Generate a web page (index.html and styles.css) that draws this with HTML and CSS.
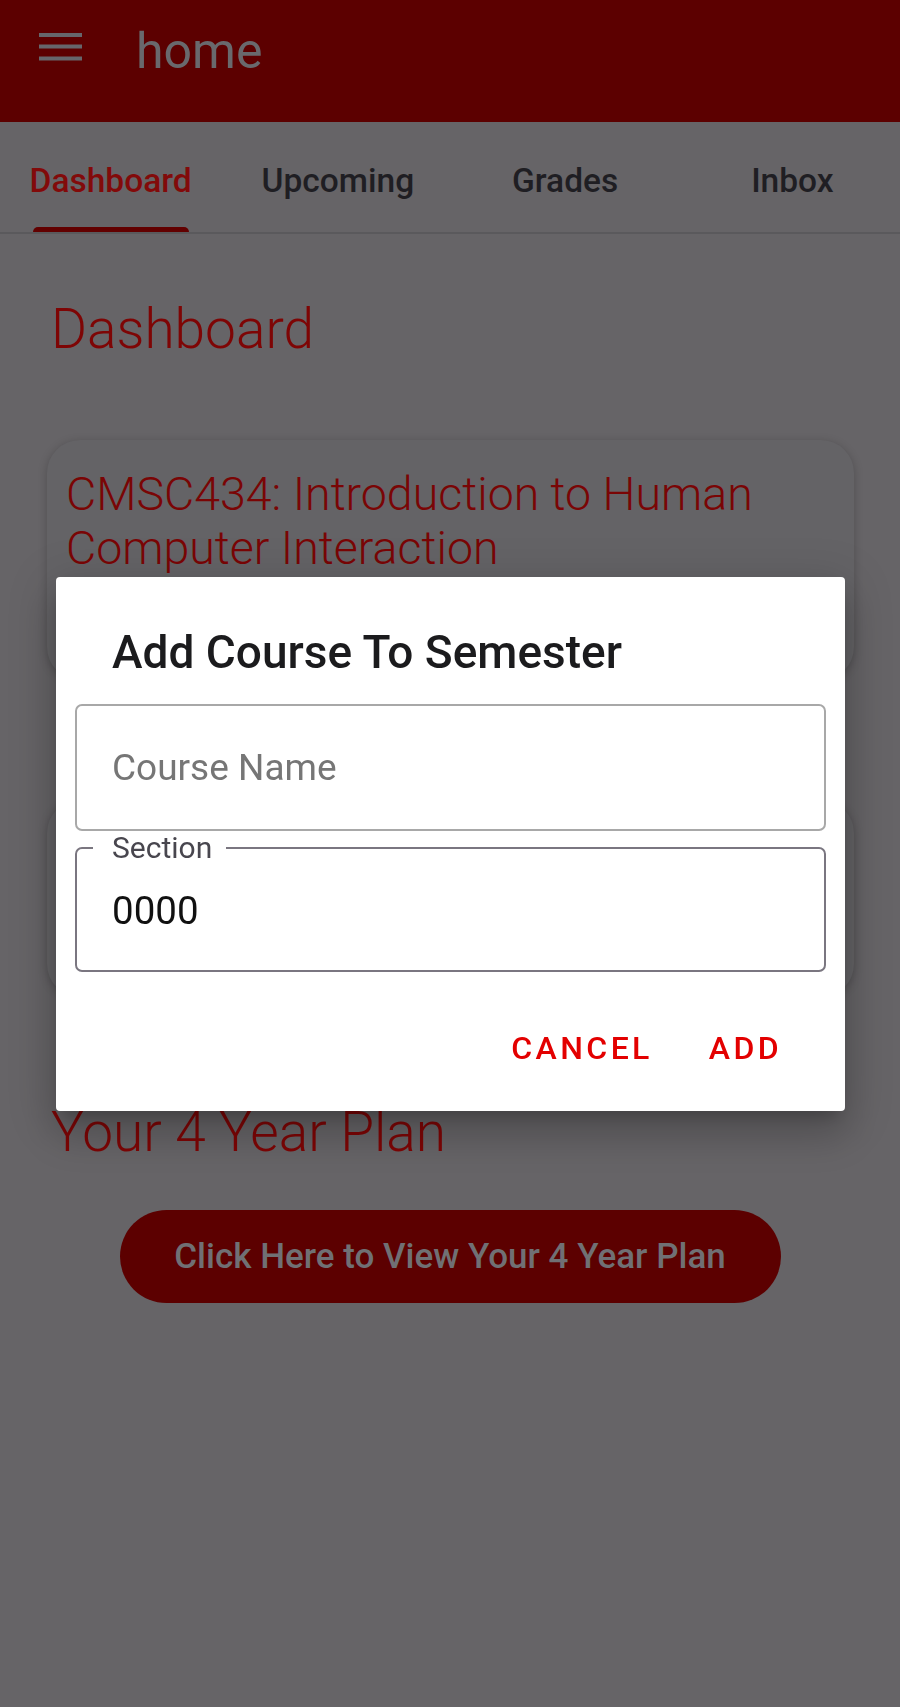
FILE: index.html
```html
<!DOCTYPE html>
<html lang="en">
<head>
<meta charset="utf-8">
<title>home</title>
<link rel="stylesheet" href="styles.css">
</head>
<body>
  <header class="topbar">
    <svg class="menu-icon" width="43" height="28" viewBox="0 0 43 28" aria-hidden="true">
      <rect x="0" y="0" width="43" height="4" fill="currentColor"/>
      <rect x="0" y="11.5" width="43" height="4" fill="currentColor"/>
      <rect x="0" y="23.5" width="43" height="4" fill="currentColor"/>
    </svg>
    <span class="app-title">home</span>
  </header>

  <nav class="tabs">
    <div class="tab active"><span class="tab-inner"><span class="tab-label">Dashboard</span><span class="indicator"></span></span></div>
    <div class="tab"><span class="tab-inner"><span class="tab-label">Upcoming</span></span></div>
    <div class="tab"><span class="tab-inner"><span class="tab-label">Grades</span></span></div>
    <div class="tab"><span class="tab-inner"><span class="tab-label">Inbox</span></span></div>
  </nav>

  <main class="content">
    <h1 class="section-heading first">Dashboard</h1>
    <section class="card card-one">
      <h2 class="card-title">CMSC434: Introduction to Human Computer Interaction</h2>
    </section>
    <section class="card card-two"></section>
    <h1 class="section-heading">Your 4 Year Plan</h1>
    <div class="plan-row">
      <button class="plan-button">Click Here to View Your 4 Year Plan</button>
    </div>
  </main>

  <div class="scrim">
    <div class="dialog" role="dialog">
      <h3 class="dialog-title">Add Course To Semester</h3>
      <div class="field">
        <span class="placeholder">Course Name</span>
      </div>
      <fieldset class="field-outlined">
        <legend class="field-label">Section</legend>
        <div class="field-value">0000</div>
      </fieldset>
      <div class="dialog-actions">
        <button class="text-button">CANCEL</button>
        <button class="text-button">ADD</button>
      </div>
    </div>
  </div>
</body>
</html>
```

FILE: styles.css
```css
* {
  box-sizing: border-box;
}

html, body {
  margin: 0;
  padding: 0;
  background: #666467;
}

body {
  width: 900px;
  min-height: 1707px;
  font-family: Roboto, "Noto Sans", "Liberation Sans", sans-serif;
}

/* ---------- Top bar ---------- */
.topbar {
  height: 122px;
  background: #5c0000;
  display: flex;
  align-items: flex-start;
  padding-left: 39px;
}

.menu-icon {
  color: #66666b;
  margin-top: 33px;
  flex: none;
}

.app-title {
  margin-top: 22px;
  margin-left: 54px;
  font-size: 50px;
  line-height: 58px;
  color: #69696d;
  font-weight: 400;
}

/* ---------- Tabs ---------- */
.tabs {
  display: flex;
  height: 112px;
  border-bottom: 2px solid #5a595c;
  margin-left: -3px;
  margin-right: -6px;
}

.tab {
  flex: 1;
  display: flex;
  justify-content: center;
  padding-top: 39px;
}

.tab-inner {
  display: flex;
  flex-direction: column;
  align-items: stretch;
}

.tab-label {
  font-size: 33.5px;
  line-height: 40px;
  font-weight: 500;
  color: #1f1e23;
  white-space: nowrap;
}

.tab.active .tab-label {
  color: #820a0a;
}

.indicator {
  display: block;
  margin-top: 26px;
  height: 7px;
  margin-left: 3px;
  margin-right: 3px;
  background: #620000;
  border-radius: 5px 5px 0 0;
}

/* ---------- Content ---------- */
.content {
  padding: 0 46px 0 47px;
}

.section-heading {
  margin: 104px 0 0 4px;
  font-size: 55px;
  line-height: 63px;
  font-weight: 300;
  color: #7e0505;
}

.section-heading.first {
  margin-top: 64px;
}

.card {
  background: #646366;
  border-radius: 33px;
  box-shadow: 0 2px 10px rgba(0, 0, 0, 0.22);
  padding: 27px 19px;
}

.card-one {
  margin-top: 79px;
  height: 240px;
}

.card-two {
  margin-top: 120px;
  height: 197px;
}

.card-title {
  margin: 0;
  font-size: 46.5px;
  line-height: 54px;
  font-weight: 300;
  color: #7a0505;
}

.plan-row {
  display: flex;
  justify-content: center;
  margin-top: 46px;
  margin-left: -47px;
  margin-right: -46px;
}

.plan-button {
  width: 661px;
  height: 93px;
  border: none;
  border-radius: 47px;
  background: #5c0000;
  color: #707074;
  font-family: Roboto, "Noto Sans", "Liberation Sans", sans-serif;
  font-size: 35px;
  font-weight: 500;
  padding: 0;
}

/* ---------- Dialog ---------- */
.scrim {
  position: fixed;
  inset: 0;
  display: flex;
  align-items: center;
  justify-content: center;
}

.dialog {
  width: 789px;
  margin-bottom: 19px;
  margin-left: 1px;
  background: #ffffff;
  border-radius: 4px;
  padding: 48px 19px 33px;
  box-shadow: 0 11px 15px -7px rgba(0, 0, 0, 0.2),
              0 24px 38px 3px rgba(0, 0, 0, 0.14),
              0 9px 46px 8px rgba(0, 0, 0, 0.12);
}

.dialog-title {
  margin: 0 0 25px 37px;
  font-size: 46px;
  line-height: 54px;
  font-weight: 500;
  color: #1b1b1d;
}

.field {
  height: 127px;
  border: 2px solid #a8a8a8;
  border-radius: 7px;
  display: flex;
  align-items: center;
  padding-left: 35px;
}

.placeholder {
  font-size: 37px;
  color: #767676;
}

.field-outlined {
  margin: 0;
  padding: 0 0 37px 16px;
  border: 2px solid #7a7680;
  border-radius: 7px;
  min-width: 0;
}

.field-label {
  padding: 0 14px 0 19px;
  font-size: 30px;
  line-height: 34px;
  color: #48464e;
}

.field-value {
  margin-top: 24px;
  padding-left: 19px;
  font-size: 38.5px;
  line-height: 44px;
  color: #111111;
}

.dialog-actions {
  display: flex;
  justify-content: flex-end;
  gap: 24px;
  margin-top: 46px;
  padding-right: 28px;
}

.text-button {
  border: none;
  background: transparent;
  padding: 12px 16px;
  font-family: Roboto, "Noto Sans", "Liberation Sans", sans-serif;
  font-size: 32px;
  line-height: 36px;
  font-weight: 500;
  letter-spacing: 3.4px;
  color: #e30000;
}
```
